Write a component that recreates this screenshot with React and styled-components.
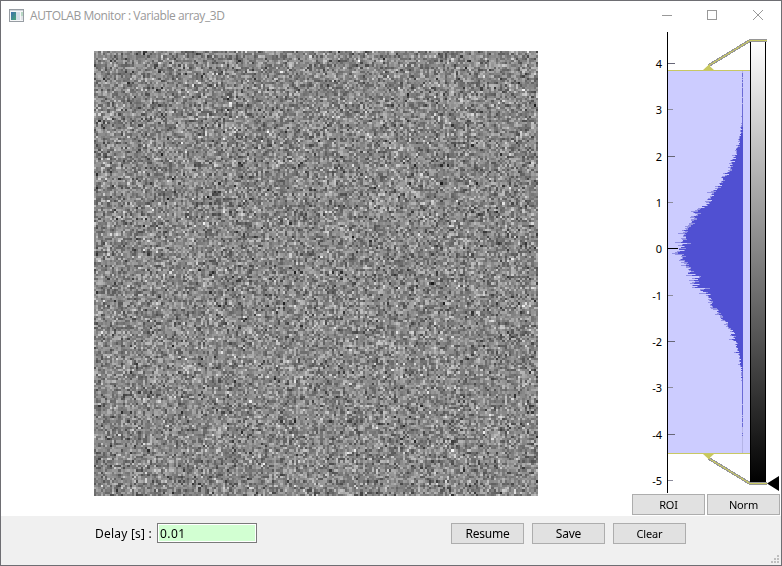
import React, { useLayoutEffect, useRef } from "react";
import styled, { createGlobalStyle } from "styled-components";

const GlobalStyle = createGlobalStyle`
  * { box-sizing: border-box; }
  html, body { margin: 0; padding: 0; background: #fff; overflow: hidden; }
`;

const Window = styled.div`
  width: 782px;
  height: 566px;
  display: flex;
  flex-direction: column;
  border: 1px solid #6e6e73;
  background: #fff;
  color: #000;
  font-family: "Noto Sans", "Open Sans", sans-serif;
`;

const TitleBar = styled.header`
  height: 30px;
  flex: none;
  display: flex;
  align-items: center;
  padding-left: 8px;
`;

const AppIcon = styled.svg`
  width: 15px;
  height: 13px;
  flex: none;
  margin-right: 6px;
  margin-top: -2px;
`;

const Title = styled.span`
  flex: 1;
  font-family: "Open Sans", "Noto Sans", sans-serif;
  font-size: 12px;
  line-height: 16px;
  letter-spacing: -0.44px;
  color: #999;
  white-space: nowrap;
`;

const Controls = styled.svg`
  width: 138px;
  height: 30px;
  flex: none;
`;

const Main = styled.main`
  height: 485px;
  flex: none;
  display: flex;
`;

const ImageView = styled.section`
  width: 630px;
  padding: 20px 0 0 93px;
`;

const NoiseCanvas = styled.canvas`
  display: block;
  width: 444px;
  height: 445px;
  image-rendering: pixelated;
`;

const SidePanel = styled.aside`
  width: 150px;
  display: flex;
  flex-direction: column;
`;

const Chart = styled.svg`
  display: block;
  width: 150px;
  height: 463px;
  flex: none;
`;

const TickLabel = styled.text`
  font-family: "Noto Sans", "Open Sans", sans-serif;
  font-size: 11px;
  text-anchor: end;
  fill: #000;
`;

const PanelButtons = styled.div`
  display: flex;
  gap: 2px;
  padding: 0 0 0 1px;
`;

const Footer = styled.footer`
  flex: 1;
  display: flex;
  align-items: flex-start;
  background: #f0f0f0;
`;

const Label = styled.label`
  width: 62px;
  margin: 9px 0 0 94px;
  font-size: 12px;
  line-height: 18px;
  white-space: pre;
  letter-spacing: 0.22px;
`;

const Field = styled.input`
  width: 100px;
  height: 20px;
  margin: 7px 194px 0 0;
  padding: 1px 2px 0;
  border: 1px solid #7a7a7a;
  border-radius: 0;
  outline: 0;
  box-shadow: inset 0 0 0 1px #fff;
  background: #d2ffd2;
  color: #000;
  font: 12px/17px "Noto Sans", "Open Sans", sans-serif;
  letter-spacing: 0.4px;
`;

const Button = styled.button`
  width: 73px;
  height: 21px;
  padding: ${(p) => (p.$small ? "0" : "1px 0 0")};
  border: 1px solid #adadad;
  background: #e1e1e1;
  color: #000;
  font-family: "Noto Sans", "Open Sans", sans-serif;
  font-size: ${(p) => (p.$small ? "11px" : "12px")};
  line-height: 18px;
  letter-spacing: ${(p) => (p.$small ? "-0.15px" : "-0.2px")};
`;

const Actions = styled.div`
  flex: 1;
  display: flex;
  gap: 8px;
  padding-top: 7px;
`;

const Grip = styled.svg`
  width: 10px;
  height: 10px;
  align-self: flex-end;
  margin: 0 1px 1px 0;
`;

function makeRandom(seed) {
  let s = seed;
  const uniform = () => {
    s = (s + 0x6d2b79f5) | 0;
    let t = Math.imul(s ^ (s >>> 15), 1 | s);
    t = (t + Math.imul(t ^ (t >>> 7), 61 | t)) ^ t;
    return (((t ^ (t >>> 14)) >>> 0) + 1) / 4294967297;
  };
  return () => Math.sqrt(-2 * Math.log(uniform())) * Math.cos(2 * Math.PI * uniform());
}

const GRID = 200;
const LEVELS = { min: -4.42, max: 3.85 };

function ArrayImage() {
  const ref = useRef(null);
  useLayoutEffect(() => {
    const ctx = ref.current.getContext("2d");
    const image = ctx.createImageData(GRID, GRID);
    const normal = makeRandom(31);
    for (let i = 0; i < GRID * GRID; i++) {
      const v = (255 * (normal() - LEVELS.min)) / (LEVELS.max - LEVELS.min);
      image.data[i * 4] = v;
      image.data[i * 4 + 1] = v;
      image.data[i * 4 + 2] = v;
      image.data[i * 4 + 3] = 255;
    }
    ctx.putImageData(image, 0, 0);
  }, []);
  return <NoiseCanvas ref={ref} width={GRID} height={GRID} />;
}

const ZERO_Y = 217.9;
const UNIT = 46.35;
const BASE_X = 112;

function histogramBars() {
  const normal = makeRandom(8);
  const bars = [];
  for (let y = 40; y < 422; y++) {
    const z = (y + 0.5 - ZERO_Y) / UNIT;
    const mean = 60 * Math.exp((-z * z) / 2);
    const spread = Math.sqrt(mean) * 0.42;
    const solid = mean + normal() * spread - 0.5;
    const far = Math.abs(z) > 2.9;
    const w = far ? (normal() > 3 * (Math.abs(z) - 3.75) ? 1 : 0) : Math.max(1, Math.round(solid));
    const fringe = far ? 0 : Math.round(Math.abs(normal()) * spread * 1.1);
    bars.push({ y, w, fringe });
  }
  return bars;
}
const BARS = histogramBars();
const TICKS = [4, 3, 2, 1, 0, -1, -2, -3, -4, -5];

function Histogram() {
  return (
    <Chart viewBox="0 0 150 463">
      <defs>
        <linearGradient id="levels" x1="0" y1="0" x2="0" y2="1">
          <stop offset="0" stopColor="#fff" />
          <stop offset="1" stopColor="#000" />
        </linearGradient>
      </defs>
      <g shapeRendering="crispEdges">
        <rect x="37" y="40" width="82" height="382" fill="#ccccff" />
        <rect x="111" y="40" width="1" height="382" fill="#b4b4e6" />
        {BARS.map((b) => (
          <g key={b.y}>
            <rect x={BASE_X - b.w - b.fringe} y={b.y} width={b.fringe} height="1" fill="#9292e3" />
            <rect
              x={BASE_X - b.w}
              y={b.y}
              width={b.w}
              height="1"
              fill={b.w === 1 ? "#6a6ad6" : "#5050d2"}
            />
          </g>
        ))}
        <rect x="37" y="39" width="82" height="1" fill="#c8c864" />
        <rect x="37" y="422" width="82" height="1" fill="#c8c864" />
        <rect x="36" y="1" width="1" height="461" fill="#000" />
        {TICKS.map((t) => (
          <rect
            key={t}
            x="37"
            y={Math.floor(ZERO_Y - t * UNIT)}
            width={t === 0 ? 10 : t % 2 === 0 ? 7 : 5}
            height="1"
            fill={t === 0 ? "#000" : t % 2 === 0 ? "#666677" : "#8c8c9c"}
          />
        ))}
        <rect x="119" y="10" width="16" height="442" fill="url(#levels)" />
        <rect x="119" y="10" width="1" height="442" fill="#000" />
        <rect x="134" y="10" width="1" height="442" fill="#000" />
      </g>
      {TICKS.map((t) => (
        <TickLabel key={t} x="31" y={Math.floor(ZERO_Y - t * UNIT) + 5}>
          {t}
        </TickLabel>
      ))}
      <g fill="none" strokeLinejoin="round" shapeRendering="crispEdges">
        <path d="M77 35L119 9.5H136M77 427L119 452.5H136" stroke="#969696" strokeWidth="3" />
        <path d="M77 35L119 9.5H136M77 427L119 452.5H136" stroke="#c8c864" strokeWidth="1" />
      </g>
      <path d="M72 39L77.5 34L83 39ZM72 423L77.5 428L83 423Z" fill="#c8c85f" />
      <path d="M136 452.5L148 445V460Z" fill="#000" />
    </Chart>
  );
}

export default function App() {
  return (
    <>
      <GlobalStyle />
      <Window>
        <TitleBar>
          <AppIcon viewBox="0 0 15 13">
            <defs>
              <linearGradient id="pane" x1="0" y1="0" x2="1" y2="1">
                <stop offset="0" stopColor="#3d6fae" />
                <stop offset="1" stopColor="#4aa577" />
              </linearGradient>
            </defs>
            <rect x="0.5" y="0.5" width="14" height="12" fill="#f6f7f8" stroke="#979da3" />
            <rect x="1" y="1" width="13" height="1" fill="#d0d5db" />
            <rect x="2" y="3" width="5" height="8" fill="url(#pane)" />
            <rect x="7" y="3" width="4" height="8" fill="#d5dfe8" />
            <rect x="12" y="3" width="2" height="4" fill="#b8d7c4" />
            <rect x="12" y="7" width="2" height="4" fill="#e1e4e8" />
          </AppIcon>
          <Title>AUTOLAB Monitor : Variable array_3D</Title>
          <Controls viewBox="0 0 138 30" fill="none" stroke="#999">
            <path d="M19 14.5H29" />
            <rect x="64.5" y="9.5" width="9" height="9" />
            <path d="M110 9L120 19M120 9L110 19" />
          </Controls>
        </TitleBar>
        <Main>
          <ImageView>
            <ArrayImage />
          </ImageView>
          <SidePanel>
            <Histogram />
            <PanelButtons>
              <Button $small>ROI</Button>
              <Button $small>Norm</Button>
            </PanelButtons>
          </SidePanel>
        </Main>
        <Footer>
          <Label htmlFor="delay">Delay [s] :</Label>
          <Field id="delay" defaultValue="0.01" />
          <Actions>
            <Button>Resume</Button>
            <Button>Save</Button>
            <Button $small>Clear</Button>
          </Actions>
          <Grip viewBox="0 0 10 10" fill="#bfbfbf">
            <path d="M7 1h2v2h-2zM4 4h2v2h-2zM7 4h2v2h-2zM1 7h2v2h-2zM4 7h2v2h-2zM7 7h2v2h-2z" />
          </Grip>
        </Footer>
      </Window>
    </>
  );
}
